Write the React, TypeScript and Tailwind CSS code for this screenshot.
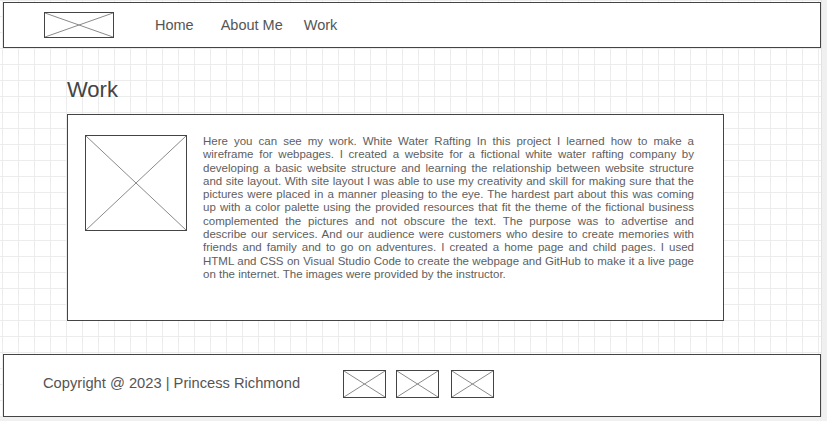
import React from 'react';

function Placeholder({ className }: { className: string }) {
  return (
    <div className={`relative shrink-0 border border-[#444] bg-white ${className}`}>
      <svg className="absolute inset-0 h-full w-full" viewBox="0 0 100 100" preserveAspectRatio="none">
        <line x1="0" y1="0" x2="100" y2="100" stroke="#8a8a8a" strokeWidth="1" vectorEffect="non-scaling-stroke" />
        <line x1="100" y1="0" x2="0" y2="100" stroke="#8a8a8a" strokeWidth="1" vectorEffect="non-scaling-stroke" />
      </svg>
    </div>
  );
}

// line breaks kept as in the mockup
const workLines = [
  'Here you can see my work. White Water Rafting In this project I learned how to make a',
  'wireframe for webpages. I created a website for a fictional white water rafting company by',
  'developing a basic website structure and learning the relationship between website structure',
  'and site layout. With site layout I was able to use my creativity and skill for making sure that the',
  'pictures were placed in a manner pleasing to the eye. The hardest part about this was coming',
  'up with a color palette using the provided resources that fit the theme of the fictional business',
  'complemented the pictures and not obscure the text. The purpose was to advertise and',
  'describe our services. And our audience were customers who desire to create memories with',
  'friends and family and to go on adventures. I created a home page and child pages. I used',
  'HTML and CSS on Visual Studio Code to create the webpage and GitHub to make it a live page',
  'on the internet. The images were provided by the instructor.',
];

export default function App() {
  return (
    <div className="w-[827px] h-[421px] overflow-hidden bg-[#f0f0f0] font-['Liberation_Sans',Arial,sans-serif]">
      <div className="flex h-[417px] w-[822px] flex-col border-r border-[#e2e2e2] bg-white bg-[linear-gradient(to_right,#ececec_1px,transparent_1px),linear-gradient(to_bottom,#ececec_1px,transparent_1px)] bg-[size:16px_16px] bg-[position:2px_0px] pl-[3px] pt-[2px]">
        <header className="flex h-[46px] w-[818px] items-center border border-[#444] bg-white pl-[40px]">
          <Placeholder className="h-[26px] w-[70px]" />
          <nav className="flex items-center pt-[2px] text-[14.5px] text-[#555]">
            <a className="ml-[41px]">Home</a>
            <a className="ml-[27px]">About Me</a>
            <a className="ml-[21px]">Work</a>
          </nav>
        </header>

        <main className="flex-1 pl-[64px] pt-[31px]">
          <h1 className="text-[22px] leading-[22px] text-[#444]">Work</h1>
          <section className="mt-[13px] flex h-[207px] w-[657px] border border-[#444] bg-white pl-[17px] pr-[29px] pt-[20px]">
            <Placeholder className="h-[96px] w-[102px]" />
            <p className="ml-[16px] w-[491px] text-[11.5px] leading-[13.3px] text-[#5e5e5e]">
              {workLines.map((line, i) => (
                <span
                  key={i}
                  className={
                    i < workLines.length - 1
                      ? 'block whitespace-nowrap text-justify [text-align-last:justify]'
                      : 'block whitespace-nowrap'
                  }
                >
                  {line}
                </span>
              ))}
            </p>
          </section>
        </main>

        <footer className="flex h-[63px] w-[818px] items-center border border-[#444] bg-white pb-[4px] pl-[39px]">
          <span className="text-[14.7px] text-[#555]">Copyright @ 2023 | Princess Richmond</span>
          <div className="ml-[43px] flex gap-[10px]">
            <Placeholder className="h-[28px] w-[43px]" />
            <Placeholder className="h-[28px] w-[43px]" />
            <Placeholder className="ml-[2px] h-[28px] w-[43px]" />
          </div>
        </footer>
      </div>
    </div>
  );
}
